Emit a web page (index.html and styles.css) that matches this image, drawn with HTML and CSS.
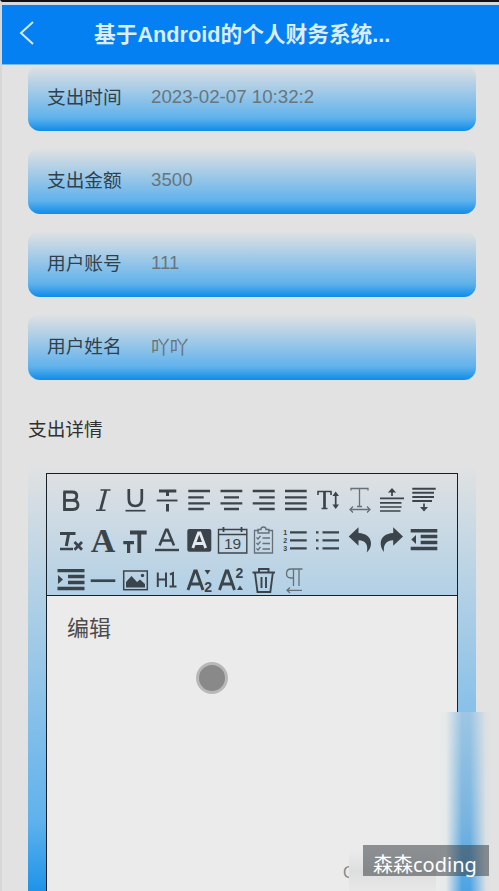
FILE: index.html
```html
<!DOCTYPE html>
<html lang="zh-CN">
<head>
<meta charset="utf-8">
<title>基于Android的个人财务系统</title>
<link rel="stylesheet" href="styles.css">
</head>
<body>
<div class="screen">
  <header class="header">
    <svg class="back" viewBox="0 0 16 26"><path d="M14 2 2 13 14 24"/></svg>
    <h1>基于Android的个人财务系统...</h1>
  </header>
  <main class="content">
    <div class="field"><span class="label">支出时间</span><span class="value">2023-02-07 10:32:2</span></div>
    <div class="field"><span class="label">支出金额</span><span class="value">3500</span></div>
    <div class="field"><span class="label">用户账号</span><span class="value">111</span></div>
    <div class="field"><span class="label">用户姓名</span><span class="value">吖吖</span></div>
    <div class="section-title">支出详情</div>
    <div class="panel">
      <div class="editor">
        <div class="toolbar">
          <svg viewBox="0 0 32 40"><path d="M9.500 12V29.500H17.500Q23 29.500 23 24.800 23 20.500 17.500 20.300H9.500M17 20.300Q21.800 20.300 21.800 16 21.800 12 17 12H8.300" stroke-width="2.800"/></svg>
          <svg viewBox="0 0 32 40"><path d="M13.500 10H23.500M9 30.300H18.500" stroke-width="1.500"/><path d="M18.800 10 13.500 30" stroke-width="2.800"/></svg>
          <svg viewBox="0 0 32 40"><path d="M9.800 9V19Q9.800 26 16.300 26T22.800 19V9" stroke-width="2.700"/><path d="M6.500 30.700H26.500" stroke-width="1.700"/></svg>
          <svg viewBox="0 0 32 40"><path d="M8 11H25.300M16.500 11V16M16.500 24V31.500" stroke-width="3"/><path d="M5.700 20.500H26.500" stroke-width="1.900"/></svg>
          <svg viewBox="0 0 32 40"><path d="M5.300 11H27M5.300 17.300H20.700M5.300 23.300H27M5.300 29H20.700"/></svg>
          <svg viewBox="0 0 32 40"><path d="M5.500 11H27.300M9 17.300H24M5.500 23.300H27.300M9 29H24"/></svg>
          <svg viewBox="0 0 32 40"><path d="M5.700 11H27.700M12.300 17.300H27.700M5.700 23.300H27.700M12.300 29H27.700"/></svg>
          <svg viewBox="0 0 32 40"><path d="M6 11H27.700M6 17.300H27.700M6 23.300H27.700M6 29H27.700"/></svg>
          <svg viewBox="0 0 32 40"><path d="M7 15V11.500H20V15M10.500 28.500H16.500" stroke-width="1.600"/><path d="M13.500 11.500V28" stroke-width="2.700"/><path d="M24.700 14V27" stroke-width="1.700"/><path class="solid" d="M24.700 11.500 28 16H21.400ZM24.700 29 28 24.500H21.400Z"/></svg>
          <svg class="light" viewBox="0 0 32 40"><path d="M8 10.500V8.500H25V10.500M16.500 8.500V26.500M14 26.500H19M7 29.500H27M10 26.500 7 29.500 10 32.500M24 26.500 27 29.500 24 32.500"/></svg>
          <svg viewBox="0 0 32 40"><path d="M5 18.300H29M5 22.800H26.500M5 27H26.500M5 31H25.500" stroke-width="1.700"/><path d="M17 16V9" stroke-width="1.700"/><path class="solid" d="M17 8 21 12.500H13Z"/></svg>
          <svg viewBox="0 0 32 40"><path d="M5.300 8.800H28.700M5.300 12.800H27M5.300 17H27M5.300 21H25" stroke-width="2"/><path d="M17 23.500V30" stroke-width="1.700"/><path class="solid" d="M17 31.500 21 27H13Z"/></svg>

          <svg viewBox="0 0 32 40"><path d="M5 13.500H20.500M13.700 13.500 11.300 26" stroke-width="3.100"/><path d="M5 29H18M19.500 22 27 29.700M27 22 19.500 29.700" stroke-width="2.700"/></svg>
          <svg viewBox="0 0 32 40"><text class="serif" x="16" y="31.500" font-size="34">A</text></svg>
          <svg viewBox="0 0 32 40"><path d="M11 12.500H27.700M20.300 12.500V33" stroke-width="3.800"/><path d="M4.300 22.700H15M9.600 22.700V33" stroke-width="3.200"/></svg>
          <svg viewBox="0 0 32 40"><path d="M8.500 25.500 15 9.800H16.500L23 25.500M11 20.500H20.500" stroke-width="2.500"/><path d="M4 30H28" stroke-width="2.400"/></svg>
          <svg viewBox="0 0 32 40"><rect class="solid" x="4.300" y="9" width="24" height="22.700" rx="2"/><path class="white" d="M9.800 28 15.500 12.800H17L22.700 28M12 23.500H20.500"/></svg>
          <svg viewBox="0 0 32 40"><path d="M3.500 9.500H31.800V33H3.500ZM3.500 14.500H31.800" stroke-width="1.400"/><path d="M8.500 7V12M26.500 7V12" stroke-width="1.800"/><text x="17.500" y="29" font-size="15.500">19</text></svg>
          <svg class="light" viewBox="0 0 32 40"><path d="M12 10.500H7.500V33H25.500V10.500H21M11 13V9.500H14Q14 7 16.500 7T19 9.500H22V13ZM15.500 18H23M15.500 23.500H23M15.500 29H23M9.500 17.500 11 19 13.500 15.800M9.500 23 11 24.500 13.500 21.300M9.500 28.500 11 30 13.500 26.800"/></svg>
          <svg viewBox="0 0 32 40"><path d="M11 12.300H27.700M11 20.300H27.700M11 28.300H27.700"/><text class="bold" x="6.300" y="14.500" font-size="7">1</text><text class="bold" x="6.300" y="22.800" font-size="7">2</text><text class="bold" x="6.300" y="31" font-size="7">3</text></svg>
          <svg viewBox="0 0 32 40"><path d="M11.500 12.300H28M11.500 20.300H28M11.500 28.300H28M5 12.300H7.500M5 20.300H7.500M5 28.300H7.500"/></svg>
          <svg viewBox="0 0 32 40"><path class="solid" d="M5.700 16.500 15.500 7.300V13C23 13.500 28 17 28 23.500 28 27 26.500 30 23.700 32.500 25.500 25 23 20.500 15.500 20.200V25.800Z"/></svg>
          <svg viewBox="0 0 32 40"><path class="solid" d="M28 16.500 18.200 7.300V13C10.700 13.500 5.700 17 5.700 23.500 5.700 27 7.200 30 9 32 8.200 25 10.700 20.500 18.200 20.200V25.800Z"/></svg>
          <svg viewBox="0 0 32 40"><path d="M3.700 10.700H30.300M13.700 16.500H30.300M13.700 22.500H30.300M3.700 28.500H30.300" stroke-width="3.400"/><path class="solid" d="M4.300 19.500 9 15V24Z"/></svg>

          <svg viewBox="0 0 32 40"><path d="M2.500 10.700H29.500M13 16.500H29.500M13 22.500H29.500M2.500 28.500H29.500" stroke-width="3.300"/><path class="solid" d="M8 19.500 3 15V24Z"/></svg>
          <svg viewBox="0 0 32 40"><path d="M3.700 20.700H28.300" stroke-width="2.700"/></svg>
          <svg viewBox="0 0 32 40"><rect x="4.700" y="11" width="23.600" height="18.700" stroke-width="1.500"/><path class="solid" d="M7 27.500V22L12.500 16 18 22 21 19.500 26 24V27.500Z"/><circle class="solid" cx="23.500" cy="15.500" r="1.700"/></svg>
          <svg viewBox="0 0 32 40"><path d="M6.800 12.500V27M15 12.500V27M6.800 19.500H15M19 14.500 22 13V27M18.500 26.500H25.500" stroke-width="2"/></svg>
          <svg viewBox="0 0 32 40"><path d="M5 30 11.700 11H13.300L20 30M7.500 24H17.500" stroke-width="2.900"/><path class="solid" d="M21.500 10H27.500L24.500 14.500Z"/><text class="bold" x="25.200" y="31.500" font-size="14">2</text></svg>
          <svg viewBox="0 0 32 40"><path d="M4.500 30 11.200 11H12.800L19.500 30M7 24H17" stroke-width="2.900"/><path class="solid" d="M22 30H28L25 25.500Z"/><text class="bold" x="24.500" y="17.800" font-size="14">2</text></svg>
          <svg viewBox="0 0 32 40"><path d="M5.500 12.500H28M12 12V9H21.500V12M8 13 10.500 32H23.300L25.800 13M14.500 17V28M19 17V28" stroke-width="1.900"/></svg>
          <svg class="light" viewBox="0 0 32 40"><path d="M23.500 9H12Q7.500 9 7.500 13.500T12 18H14.500M14.500 9V26M20 9V26M23 30.300H8M11 27.500 8 30.300 11 33"/></svg>
        </div>
        <div class="page">编辑</div>
      </div>
    </div>
  </main>
  <div class="edge-haze"></div>
  <div class="corner-text">C</div>
  <div class="corner-haze"></div>
  <div class="touch"></div>
  <div class="watermark">森森coding</div>
</div>
</body>
</html>
```
FILE: styles.css
```css
* { box-sizing: border-box; }
body { margin: 0; }
.screen {
  position: relative;
  width: 499px;
  height: 891px;
  overflow: hidden;
  background: #e2e2e2;
  border-top: 2px solid #171013;
  border-left: 2px solid #d5d7d9;
  font-family: "Liberation Sans", "Noto Sans CJK SC", sans-serif;
}
.header {
  display: flex;
  align-items: center;
  height: 63px;
  padding-left: 17px;
  border-top: 3px solid #d3dbe3;
  border-bottom: 1px solid #7bb9e8;
  background: #0580f2;
}
.back {
  width: 16px;
  height: 26px;
  margin-top: -3px;
  fill: none;
  stroke: #d4eafb;
  stroke-width: 2;
}
.header h1 {
  margin: 0 0 0 59px;
  font-size: 21.7px;
  line-height: 30px;
  white-space: nowrap;
  color: #d9edfb;
}
.content { padding: 0 23px 0 26px; }
.field, .panel {
  background: linear-gradient(#e2e2e2 0%, #60b2ec 80%, #0e8ce8 100%);
  border-radius: 12px;
}
.field {
  display: flex;
  align-items: center;
  height: 66px;
  margin-bottom: 17px;
  padding: 0 19px 3px;
  font-size: 18.700px;
}
.label { width: 104px; margin-top: -2px; color: #30414e; }
.value { color: #68757f; }
.section-title {
  height: 66px;
  line-height: 65px;
  font-size: 18.700px;
  color: #303030;
}
.panel { height: 446px; padding: 10px 18px 0; }
.editor {
  height: 436px;
  border: 1.500px solid #172029;
  border-bottom: 0;
}
.toolbar {
  display: grid;
  grid-template-columns: repeat(12, 32px);
  grid-template-rows: 40px 40px 35px;
  padding: 6px 0 0 8px;
  border-bottom: 1.500px solid #172029;
}
.toolbar svg {
  width: 32px;
  height: 40px;
  overflow: visible;
  fill: none;
  stroke: #3c444b;
  stroke-width: 2.300;
}
.toolbar .light { stroke: #65707a; stroke-width: 1.300; }
.toolbar .solid { fill: #3c444b; stroke: none; }
.toolbar .white { stroke: #e5eaee; stroke-width: 2.800; }
.toolbar text { fill: #3c444b; stroke: none; text-anchor: middle; }
.toolbar .serif { font-family: "Liberation Serif", serif; font-weight: bold; }
.toolbar .bold { font-weight: bold; }
.page {
  height: 314px;
  padding: 17px 20px;
  font-size: 22px;
  line-height: 32px;
  color: #4c4c4c;
  background: #ebebeb;
}
.edge-haze {
  position: absolute;
  left: 434px;
  top: 710px;
  width: 63px;
  height: 181px;
  background:
    linear-gradient(90deg, #ebebeb 0, #e6e9ea 10px, rgba(229,233,235,0) 26px, rgba(226,226,226,0) 34px, #dce0e3 50px, #e2e2e2 56px),
    linear-gradient(#9dc6e4, #78b4e0 60%, #4ba3e5);
}
.corner-text {
  position: absolute;
  left: 341px;
  top: 862px;
  font-size: 16px;
  line-height: 18px;
  color: #888;
}
.corner-haze {
  position: absolute;
  left: 347px;
  top: 848px;
  width: 87px;
  height: 43px;
  background: linear-gradient(#ebebeb, #dddede 50%, #e9e9e9);
}
.touch {
  position: absolute;
  left: 194px;
  top: 660px;
  width: 32px;
  height: 32px;
  border: 3px solid #b8b8b8;
  border-radius: 50%;
  background: #898989;
}
.watermark {
  position: absolute;
  left: 361px;
  top: 843px;
  width: 126px;
  height: 31px;
  padding-left: 10px;
  font: 20px/39px "Noto Sans", "Noto Sans CJK SC", sans-serif;
  white-space: nowrap;
  color: #fff;
  background: rgba(55,60,64,.53);
}
```
